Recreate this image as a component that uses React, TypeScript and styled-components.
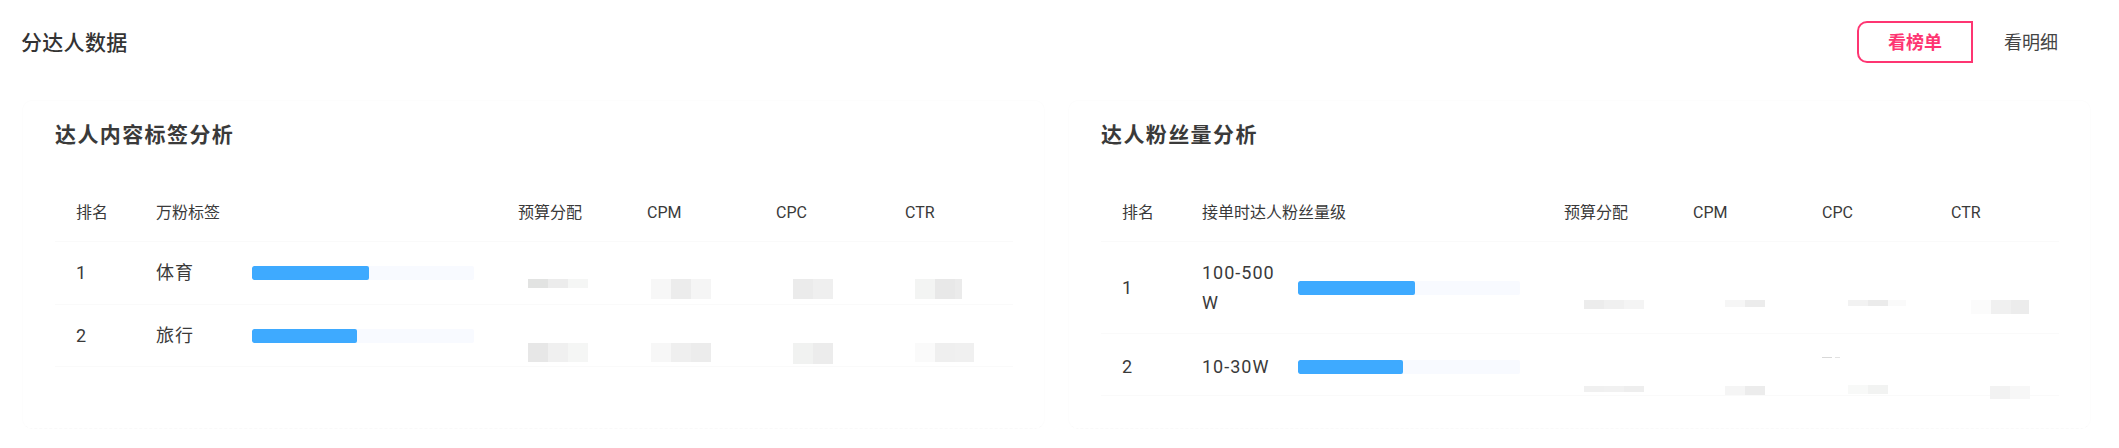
import React from "react";
import styled, { createGlobalStyle } from "styled-components";

const GlobalStyle = createGlobalStyle`
  html, body {
    margin: 0;
    padding: 0;
    background: #fff;
  }
  body {
    font-family: Roboto, "Noto Sans CJK SC", "Noto Sans", sans-serif;
    color: #333;
  }
`;

const Page = styled.div`
  width: 2119px;
  height: 448px;
  overflow: hidden;
  background: #fff;
`;

const Header = styled.header`
  display: flex;
  align-items: center;
  justify-content: space-between;
  padding: 21px 30px 0 21px;
`;

const PageTitle = styled.h2`
  margin: 0 0 2px;
  font-size: 21px;
  font-weight: 500;
  letter-spacing: 0.3px;
  color: #333;
`;

const Tabs = styled.div`
  display: flex;
`;

const Tab = styled.button<{ $active?: boolean }>`
  position: relative;
  overflow: hidden;
  width: 116px;
  height: 42px;
  padding: 0 0 2px;
  border: 2px solid ${(p) => (p.$active ? "#fe3572" : "transparent")};
  border-radius: 10px 0 0 10px;
  background: #fff;
  font-family: inherit;
  font-size: 18px;
  font-weight: ${(p) => (p.$active ? 700 : 400)};
  color: ${(p) => (p.$active ? "#fe3572" : "#444")};
`;

const TabMark = styled.span`
  position: absolute;
  left: 18px;
  top: -20px;
  font-size: 20px;
  white-space: nowrap;
  color: rgba(0, 0, 0, 0.025);
  transform: rotate(-17deg);
  transform-origin: left bottom;
`;

const Panels = styled.div`
  display: flex;
  gap: 23px;
  padding: 37px 0 0 22px;
`;

const Card = styled.section`
  box-sizing: border-box;
  width: 1023px;
  height: 329px;
  padding: 20px 32px 0;
  border: 1px solid #fdfdfd;
  border-bottom: 1px dashed #f9f9f9;
  border-radius: 10px;
`;

const SectionTitle = styled.h3`
  margin: 0 0 35px;
  font-size: 21px;
  line-height: 28px;
  font-weight: 700;
  letter-spacing: 1.4px;
  color: #3a3a3a;
`;

const Table = styled.div`
  width: 958px;
`;

const Row = styled.div<{ $height: number }>`
  display: grid;
  grid-template-columns: 80px 362px 129px 129px 129px 129px;
  height: ${(p) => p.$height}px;
  box-sizing: border-box;
  align-items: center;
  border-bottom: 1px solid #fafafa;
  font-size: 18px;
  line-height: 30px;
  letter-spacing: 1px;
  color: #3a3a3a;
`;

const HeadRow = styled(Row)`
  position: relative;
  overflow: hidden;
  padding-top: 1px;
  font-size: 16px;
  line-height: 22px;
  letter-spacing: 0;
`;

const Watermark = styled.div<{ $offset: number }>`
  position: absolute;
  top: 0;
  left: ${(p) => p.$offset}px;
  display: flex;
  pointer-events: none;
`;

const WatermarkText = styled.span`
  flex: none;
  display: flex;
  align-items: center;
  justify-content: center;
  width: 200px;
  height: 57px;
  font-size: 20px;
  white-space: nowrap;
  color: rgba(0, 0, 0, 0.025);
  transform: rotate(-17deg);
`;

const Cell = styled.div`
  padding-left: 21px;
`;

const NameCell = styled(Cell)`
  display: flex;
  align-items: center;
`;

const Name = styled.span`
  flex: none;
  width: 96px;
  padding-right: 12px;
  box-sizing: border-box;
`;

const Bar = styled.div`
  flex: none;
  width: 222px;
  height: 14px;
  border-radius: 2px;
  background: #f8faff;
  overflow: hidden;
`;

const BarFill = styled.div<{ $width: number }>`
  width: ${(p) => p.$width}px;
  height: 100%;
  border-radius: 2px;
  background: #3eaaff;
`;

const BlurCell = styled.div`
  align-self: start;
  height: 100%;
`;

const Dash = styled.div`
  width: 18px;
  height: 1px;
  margin: 23px 0 1px 21px;
  background: linear-gradient(90deg, #d8d8d8 55%, transparent 55% 75%, #e2e2e2 75%);
`;

const Mosaic = styled.div<{ $left: number; $top: number; $height: number; $width: number }>`
  display: flex;
  overflow: hidden;
  width: ${(p) => p.$width}px;
  height: ${(p) => p.$height}px;
  margin-top: ${(p) => p.$top}px;
  margin-left: ${(p) => p.$left}px;
`;

const Tile = styled.i<{ $shade: string }>`
  display: block;
  flex: none;
  width: 20px;
  background: ${(p) => p.$shade};
`;

type Patch = {
  left: number;
  top: number;
  width: number;
  height: number;
  shades: string[];
  dash?: boolean;
};
type RowData = { rank: number; name: string; fill: number; height: number; patches: Patch[] };

const leftRows: RowData[] = [
  {
    rank: 1,
    name: "体育",
    fill: 117,
    height: 63,
    patches: [
      { left: 31, top: 37, width: 60, height: 9, shades: ["#e2e3e2", "#ececec", "#f5f6f5"] },
      { left: 25, top: 37, width: 60, height: 20, shades: ["#f7f7f7", "#ececec", "#f5f5f5"] },
      { left: 38, top: 37, width: 40, height: 20, shades: ["#ebebeb", "#efefef"] },
      { left: 31, top: 37, width: 47, height: 20, shades: ["#f3f4f3", "#e8e8e8", "#ebebeb"] },
    ],
  },
  {
    rank: 2,
    name: "旅行",
    fill: 105,
    height: 62,
    patches: [
      { left: 31, top: 38, width: 60, height: 19, shades: ["#e7e7e7", "#f0f0f0", "#f5f6f5"] },
      { left: 25, top: 38, width: 60, height: 19, shades: ["#f7f7f7", "#efefef", "#ececec"] },
      { left: 38, top: 38, width: 40, height: 21, shades: ["#f1f2f1", "#ececec"] },
      { left: 31, top: 38, width: 59, height: 19, shades: ["#fafafa", "#efefef", "#f0f0f0"] },
    ],
  },
];

const rightRows: RowData[] = [
  {
    rank: 1,
    name: "100-500 W",
    fill: 117,
    height: 92,
    patches: [
      { left: 41, top: 58, width: 60, height: 9, shades: ["#ececec", "#f0f0f0", "#f4f4f4"] },
      { left: 53, top: 58, width: 40, height: 7, shades: ["#f6f6f6", "#ececec"] },
      { left: 47, top: 58, width: 58, height: 6, shades: ["#f2f2f2", "#ebebeb", "#fafafa"] },
      { left: 41, top: 58, width: 58, height: 14, shades: ["#fbfbfb", "#f0f0f0", "#ececec"] },
    ],
  },
  {
    rank: 2,
    name: "10-30W",
    fill: 105,
    height: 62,
    patches: [
      { left: 41, top: 52, width: 60, height: 6, shades: ["#f0f0f0", "#f1f1f1", "#eeeeee"] },
      { left: 53, top: 52, width: 40, height: 9, shades: ["#f5f5f5", "#ececec"] },
      { left: 47, top: 27, width: 40, height: 9, shades: ["#f8f9f8", "#f2f3f2"], dash: true },
      { left: 60, top: 52, width: 40, height: 13, shades: ["#f2f2f2", "#f7f7f7"] },
    ],
  },
];

const heads = ["预算分配", "CPM", "CPC", "CTR"];
const marks = [0, 1, 2, 3, 4, 5, 6];

function DataTable({
  title,
  nameHead,
  markOffset,
  rows,
}: {
  title: string;
  nameHead: string;
  markOffset: number;
  rows: RowData[];
}) {
  return (
    <Card>
      <SectionTitle>{title}</SectionTitle>
      <Table>
        <HeadRow $height={58}>
          <Cell>排名</Cell>
          <Cell>{nameHead}</Cell>
          {heads.map((h) => (
            <Cell key={h}>{h}</Cell>
          ))}
          <Watermark $offset={markOffset}>
            {marks.map((m) => (
              <WatermarkText key={m}>letian.1024@bytedance</WatermarkText>
            ))}
          </Watermark>
        </HeadRow>
        {rows.map((row) => (
          <Row key={row.rank} $height={row.height}>
            <Cell>{row.rank}</Cell>
            <NameCell>
              <Name>{row.name}</Name>
              <Bar>
                <BarFill $width={row.fill} />
              </Bar>
            </NameCell>
            {row.patches.map((patch, i) => (
              <BlurCell key={i}>
                {patch.dash && <Dash />}
                <Mosaic
                  $left={patch.left}
                  $top={patch.top}
                  $width={patch.width}
                  $height={patch.height}
                >
                  {patch.shades.map((shade, j) => (
                    <Tile key={j} $shade={shade} />
                  ))}
                </Mosaic>
              </BlurCell>
            ))}
          </Row>
        ))}
      </Table>
    </Card>
  );
}

export default function App() {
  return (
    <Page>
      <GlobalStyle />
      <Header>
        <PageTitle>分达人数据</PageTitle>
        <Tabs>
          <Tab $active>看榜单</Tab>
          <Tab>
            <TabMark>letian.1024@bytedance</TabMark>
            看明细
          </Tab>
        </Tabs>
      </Header>
      <Panels>
        <DataTable title="达人内容标签分析" nameHead="万粉标签" markOffset={-265} rows={leftRows} />
        <DataTable title="达人粉丝量分析" nameHead="接单时达人粉丝量级" markOffset={-111} rows={rightRows} />
      </Panels>
    </Page>
  );
}
